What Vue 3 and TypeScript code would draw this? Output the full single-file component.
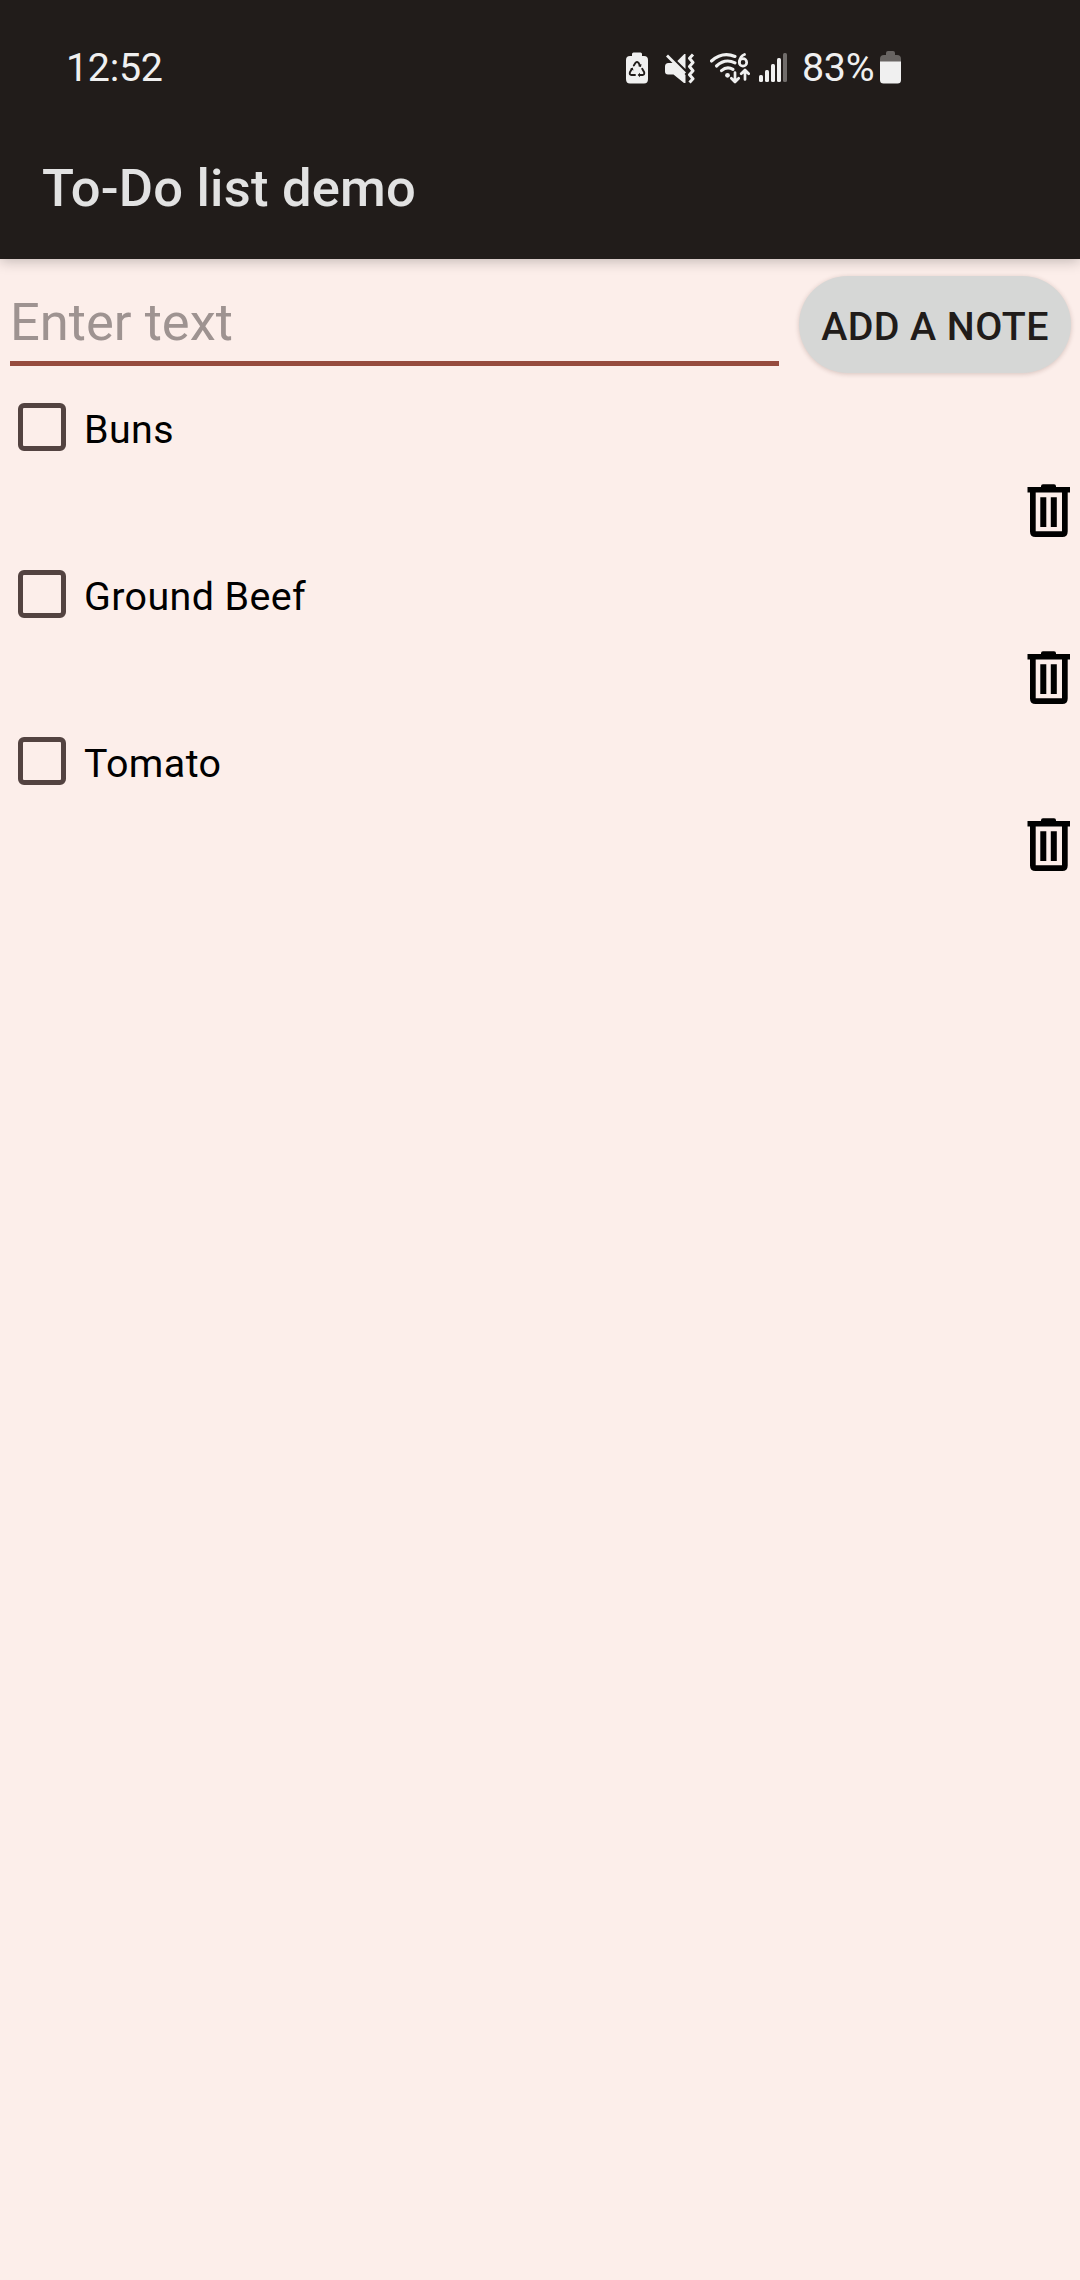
<script setup lang="ts">
import { ref } from 'vue'

interface Note {
  id: number
  text: string
  done: boolean
}

const draft = ref('')
const notes = ref<Note[]>([
  { id: 1, text: 'Buns', done: false },
  { id: 2, text: 'Ground Beef', done: false },
  { id: 3, text: 'Tomato', done: false },
])

function addNote(): void {
  const text = draft.value.trim()
  if (!text) return
  notes.value.push({ id: Date.now(), text, done: false })
  draft.value = ''
}

function removeNote(id: number): void {
  notes.value = notes.value.filter((note) => note.id !== id)
}
</script>

<template>
  <div class="screen">
    <header class="header">
      <div class="status">
        <span class="clock">12:52</span>
        <div class="indicators">
          <svg class="eco" width="22" height="32" viewBox="0 0 22 32" fill="none">
            <path d="M6 4V2Q6 0.5 7.500.5H14.500Q16 .5 16 2V4H18Q22 4 22 8V27Q22 31.500 18 31.500H4Q0 31.500 0 27V8Q0 4 4 4Z" fill="#f0f0f0" />
            <g stroke="#211c1a" stroke-width="1.900" stroke-linejoin="round" stroke-linecap="round">
              <path d="M7.800 13.500L9.700 10.600Q11 9.300 12.300 10.600L14 13.500" />
              <path d="M16.200 16.800L18.200 20.300Q18.700 22.700 16.500 23H13.500" />
              <path d="M9 23H5.500Q3.200 22.700 3.900 20.300L5.800 17" />
            </g>
            <path d="M11.900 14L15 15L15.500 12Z M14 20.700V25.200L11.700 23Z M4 17L6.700 15.600L7.500 18.600Z" fill="#211c1a" />
          </svg>
          <svg class="mute" width="30" height="32" viewBox="0 0 30 32" fill="none">
            <path d="M0 13.500Q0 10 3.500 10H8.500L20.500 22V30H19L8.500 21.500H3Q0 21.500 0 18.500Z" fill="#f0f0f0" />
            <path d="M20.500 1V16L12.300 8L19.300 1Z" fill="#f0f0f0" />
            <path d="M2 2.500L20 20.500" stroke="#f0f0f0" stroke-width="2.800" />
            <path d="M28 1.500L24.500 5.300L28 9.500L24.500 13.500L28 17.700L24.500 21.700L28 25.700L24.500 29.500" stroke="#f0f0f0" stroke-width="3" stroke-linejoin="round" />
          </svg>
          <svg class="wifi" width="40" height="32" viewBox="0 0 40 32" fill="none">
            <g stroke="#f0f0f0" stroke-width="3.100" stroke-linecap="round">
              <path d="M1.500 8Q12.500-1.800 25 3.500" />
              <path d="M6.500 13Q15 5 25 9.800" />
              <path d="M11.500 17.700Q17 12.700 23 16.400" />
            </g>
            <circle cx="17.500" cy="22.300" r="2.400" fill="#f0f0f0" />
            <g stroke="#f0f0f0" stroke-width="2.700" stroke-linecap="round" stroke-linejoin="round">
              <path d="M25 19.500V28.500M21.300 25.300L25 29L28.700 25.300" />
              <path d="M35 26.500V17.500M31.200 20.800L35 17L38.700 20.800" />
              <circle cx="33" cy="9.400" r="3.700" />
              <path d="M34.500 1.500Q30.200 3 29.300 9" />
            </g>
          </svg>
          <svg class="signal" width="28" height="30" viewBox="0 0 28 30">
            <g fill="#f0f0f0">
              <rect x="0" y="22" width="4" height="7" rx="1.500" />
              <rect x="6" y="17" width="4" height="12" rx="1.500" />
              <rect x="12" y="11" width="4" height="18" rx="1.500" />
              <rect x="18" y="5" width="4" height="24" rx="1.500" />
            </g>
            <rect x="24" y="0" width="4" height="29" rx="1.500" fill="#716d6b" />
          </svg>
          <span class="percent">83%</span>
          <svg class="battery" width="21" height="33" viewBox="0 0 21 33">
            <path d="M6 4V2Q6 0 8 0H13Q15 0 15 2V4H17Q21 4 21 8V11H0V8Q0 4 4 4Z" fill="#686462" />
            <path d="M0 10.500H21V29Q21 32.500 17.500 32.500H3.500Q0 32.500 0 29Z" fill="#f0f0f0" />
          </svg>
        </div>
      </div>
      <h1 class="title">To-Do list demo</h1>
    </header>

    <main class="content">
      <form class="composer" @submit.prevent="addNote">
        <input v-model="draft" class="field" type="text" placeholder="Enter text" />
        <button class="add" type="submit">ADD A NOTE</button>
      </form>

      <ul class="notes">
        <li v-for="note in notes" :key="note.id" class="note">
          <label class="line">
            <input v-model="note.done" class="box" type="checkbox" />
            <span class="text">{{ note.text }}</span>
          </label>
          <button class="remove" type="button" aria-label="Delete" @click="removeNote(note.id)">
            <svg width="44" height="54" viewBox="0 0 44 54">
              <path d="M0.500 3H14V2.200Q14 .3 16 .3H27Q29 .3 29 2.200V3H43V8.500H40.700V47.500Q40.700 53 35.200 53H8.500Q3 53 3 47.500V8.500H0.500ZM8.700 8.500V47.300H35V8.500Z" fill-rule="evenodd" />
              <path d="M13.300 13.300H19.300V43H13.300ZM23.800 13.300H29.800V43H23.800Z" />
            </svg>
          </button>
        </li>
      </ul>
    </main>
  </div>
</template>

<style>
body {
  margin: 0;
  background: #fceeea;
}
</style>

<style scoped>
.screen {
  display: flex;
  flex-direction: column;
  width: 1080px;
  height: 2280px;
  overflow: hidden;
  background: #fceeea;
  font-family: Roboto, sans-serif;
}

.header {
  box-sizing: border-box;
  flex: none;
  height: 259px;
  background: #211c1a;
  box-shadow: 0 2px 13px rgba(0, 0, 0, 0.24);
}

.status {
  display: flex;
  align-items: center;
  justify-content: space-between;
  height: 135px;
  padding: 0 179px 0 66px;
  color: #f0f0f0;
  font-size: 39.4px;
  line-height: 40px;
}

.clock {
  letter-spacing: -0.3px;
}

.indicators {
  display: flex;
  align-items: center;
}

.indicators svg {
  flex: none;
}

.eco {
  margin-right: 17px;
}

.mute {
  margin-right: 15px;
  margin-top: 2px;
}

.wifi {
  margin-right: 9px;
  margin-top: 2px;
}

.signal {
  margin-right: 15px;
}

.percent {
  width: 78px;
  white-space: nowrap;
  letter-spacing: -0.3px;
}

.title {
  margin: 0;
  padding: 23px 0 0 42px;
  color: #e2e2e2;
  font-size: 52.5px;
  font-weight: 500;
  line-height: 60px;
  letter-spacing: 0.22px;
}

.content {
  display: flex;
  flex-direction: column;
}

.composer {
  display: flex;
  align-items: flex-start;
  gap: 20px;
  padding: 17px 9px 0 10px;
}

.field {
  box-sizing: border-box;
  flex: 1;
  min-width: 0;
  height: 90px;
  margin: 0;
  padding: 7px 0 0;
  border: 0;
  border-bottom: 5px solid #964b3e;
  border-radius: 0;
  outline: 0;
  background: transparent;
  color: #211c1a;
  font-family: inherit;
  font-size: 52.5px;
}

.field::placeholder {
  color: #9e9391;
  opacity: 1;
}

.add {
  box-sizing: border-box;
  flex: none;
  width: 272px;
  height: 97px;
  margin: 0;
  padding: 5px 0 0;
  border: 0;
  border-radius: 49px;
  background: #d6d7d6;
  box-shadow: 0 1px 5px rgba(60, 20, 10, 0.2);
  color: #211c1a;
  font-family: inherit;
  font-size: 39.4px;
  font-weight: 500;
  line-height: 46px;
  letter-spacing: 0.4px;
  white-space: nowrap;
}

.notes {
  margin: 0;
  padding: 0;
  list-style: none;
}

.note {
  display: flex;
  flex-direction: column;
  height: 167px;
}

.line {
  display: flex;
  align-items: center;
  height: 108px;
  padding-left: 18px;
}

.box {
  appearance: none;
  box-sizing: border-box;
  flex: none;
  width: 48px;
  height: 48px;
  margin: 0;
  border: 5.5px solid #534341;
  border-radius: 6px;
}

.box:checked {
  background: #534341;
}

.text {
  margin-left: 18px;
  padding-top: 5px;
  color: #000;
  font-size: 39.4px;
  line-height: 46px;
  letter-spacing: 0.4px;
}

.remove {
  display: flex;
  align-self: flex-end;
  margin: 3px 9px 0 0;
  padding: 0;
  border: 0;
  background: none;
}
</style>
